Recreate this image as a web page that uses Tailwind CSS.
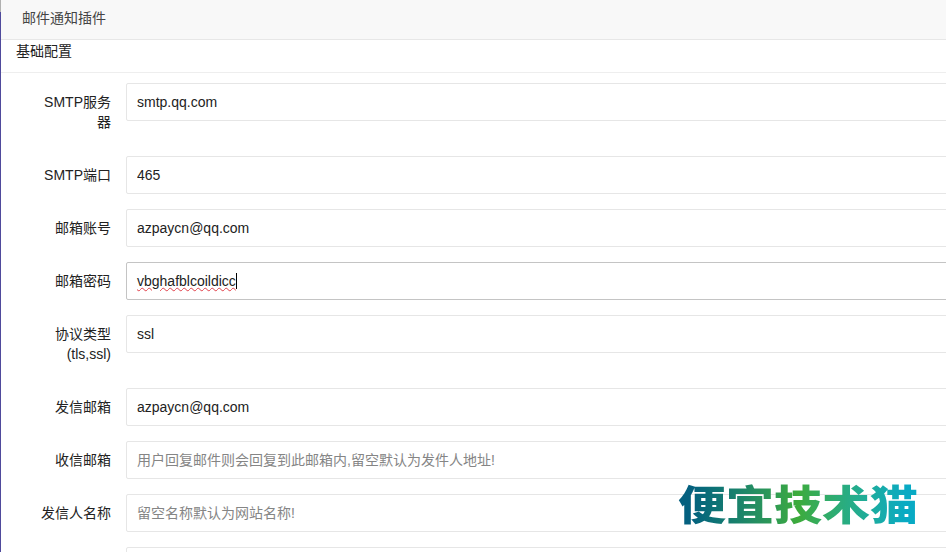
<!DOCTYPE html>
<html lang="zh-CN">
<head>
    <meta charset="UTF-8">
    <meta name="viewport" content="width=device-width, initial-scale=1.0">
    <title>邮件通知插件</title>
    <script src="https://cdn.jsdelivr.net/npm/@tailwindcss/browser@4"></script>
</head>
<body class="bg-white h-[552px] overflow-hidden font-['Liberation_Sans','Noto_Sans_CJK_SC',sans-serif] text-[14px] text-[#222]">
    <div class="relative h-[552px] w-[946px] overflow-hidden border-l border-[#4f4a9c]">
        <!-- Panel heading -->
        <div class="h-[40px] bg-[#f8f8f8] border-b border-[#e7e7e7] pl-[21px] leading-[37px] text-[#444]">邮件通知插件</div>
        <div class="h-[33px] border-b border-[#eeeeee] pl-[15px] leading-[22px]">基础配置</div>

        <!-- Form rows -->
        <form class="pt-[10px] flex flex-col gap-[15px]">
            <div class="flex h-[58px]">
                <label class="w-[110px] shrink-0 pl-[30px] text-right pt-[9px] leading-[20px]">SMTP服务器</label>
                <input type="text" value="smtp.qq.com" class="ml-[15px] w-[860px] shrink-0 h-[38px] px-[10px] bg-white border border-[#e6e6e6] rounded-[2px] outline-none">
            </div>
            <div class="flex h-[38px]">
                <label class="w-[110px] shrink-0 pl-[30px] text-right pt-[9px] leading-[20px]">SMTP端口</label>
                <input type="text" value="465" class="ml-[15px] w-[860px] shrink-0 h-[38px] px-[10px] bg-white border border-[#e6e6e6] rounded-[2px] outline-none">
            </div>
            <div class="flex h-[38px]">
                <label class="w-[110px] shrink-0 pl-[30px] text-right pt-[9px] leading-[20px]">邮箱账号</label>
                <input type="text" value="azpaycn@qq.com" class="ml-[15px] w-[860px] shrink-0 h-[38px] px-[10px] bg-white border border-[#e6e6e6] rounded-[2px] outline-none">
            </div>
            <div class="flex h-[38px]">
                <label class="w-[110px] shrink-0 pl-[30px] text-right pt-[9px] leading-[20px]">邮箱密码</label>
                <!-- focused field, drawn as a div so the spellcheck squiggle shows -->
                <div class="ml-[15px] w-[860px] shrink-0 h-[38px] px-[10px] bg-white border border-[#c4c4c4] rounded-[2px] leading-[36px]"><span class="underline decoration-wavy decoration-[#e0404a] decoration-1 border-r border-black">vbghafblcoildicc</span></div>
            </div>
            <div class="flex h-[58px]">
                <label class="w-[110px] shrink-0 pl-[30px] text-right pt-[9px] leading-[20px]">协议类型(tls,ssl)</label>
                <input type="text" value="ssl" class="ml-[15px] w-[860px] shrink-0 h-[38px] px-[10px] bg-white border border-[#e6e6e6] rounded-[2px] outline-none">
            </div>
            <div class="flex h-[38px]">
                <label class="w-[110px] shrink-0 pl-[30px] text-right pt-[9px] leading-[20px]">发信邮箱</label>
                <input type="text" value="azpaycn@qq.com" class="ml-[15px] w-[860px] shrink-0 h-[38px] px-[10px] bg-white border border-[#e6e6e6] rounded-[2px] outline-none">
            </div>
            <div class="flex h-[38px]">
                <label class="w-[110px] shrink-0 pl-[30px] text-right pt-[9px] leading-[20px]">收信邮箱</label>
                <input type="text" placeholder="用户回复邮件则会回复到此邮箱内,留空默认为发件人地址!" class="ml-[15px] w-[860px] shrink-0 h-[38px] px-[10px] bg-white border border-[#e6e6e6] rounded-[2px] outline-none placeholder:text-[#858585]">
            </div>
            <div class="flex h-[38px]">
                <label class="w-[110px] shrink-0 pl-[30px] text-right pt-[9px] leading-[20px]">发信人名称</label>
                <input type="text" placeholder="留空名称默认为网站名称!" class="ml-[15px] w-[860px] shrink-0 h-[38px] px-[10px] bg-white border border-[#e6e6e6] rounded-[2px] outline-none placeholder:text-[#858585]">
            </div>
            <div class="flex h-[38px]">
                <div class="w-[110px] shrink-0"></div>
                <input type="text" class="ml-[15px] w-[860px] shrink-0 h-[38px] px-[10px] bg-white border border-[#e6e6e6] rounded-[2px] outline-none">
            </div>
        </form>

        <!-- Watermark -->
        <div class="absolute left-[677px] top-[475px] text-[48px] leading-[54px] font-black scale-y-[0.86] whitespace-nowrap font-['Noto_Sans_CJK_SC',sans-serif] bg-gradient-to-r from-[#04607f] from-5% via-[#3dab3a] via-50% to-[#08aac4] to-95% bg-clip-text text-transparent">便宜技术猫</div>
    </div>
    <!-- grey sliver at the very top of the left edge -->
    <div class="absolute left-0 top-0 w-px h-[12px] bg-[#b0b0b0]"></div>
</body>
</html>
